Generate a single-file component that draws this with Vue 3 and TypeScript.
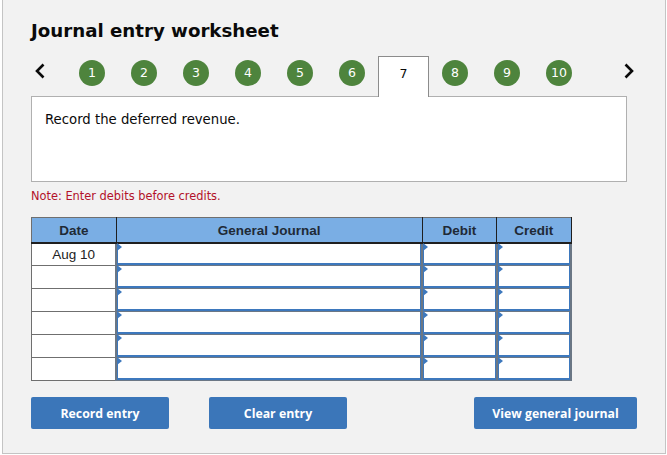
<script setup lang="ts">
const steps = [1, 2, 3, 4, 5, 6, 7, 8, 9, 10];
const activeStep = 7;
const rows = ['Aug 10', '', '', '', '', ''];
</script>

<template>
	<div class="panel">
		<h1 class="title">Journal entry worksheet</h1>

		<div class="nav">
			<svg class="chevron" width="10" height="16" viewBox="0 0 10 16">
				<path d="M8.5 1.5 L2 8 L8.5 14.5" fill="none" stroke="#0a0a0a" stroke-width="2.6" />
			</svg>
			<div class="steps">
				<div v-for="step in steps" :key="step" class="step" :class="{ active: step === activeStep }">
					<span v-if="step === activeStep" class="tab">{{ step }}</span>
					<span v-else class="dot">{{ step }}</span>
				</div>
			</div>
			<svg class="chevron right" width="10" height="16" viewBox="0 0 10 16">
				<path d="M1.5 1.5 L8 8 L1.5 14.5" fill="none" stroke="#0a0a0a" stroke-width="2.6" />
			</svg>
		</div>

		<div class="prompt">Record the deferred revenue.</div>
		<p class="note">Note: Enter debits before credits.</p>

		<table class="journal">
			<thead>
				<tr>
					<th class="col-date">Date</th>
					<th class="col-journal">General Journal</th>
					<th class="col-amount">Debit</th>
					<th class="col-amount">Credit</th>
				</tr>
			</thead>
			<tbody>
				<tr v-for="(date, i) in rows" :key="i">
					<td class="date">{{ date }}</td>
					<td class="entry"></td>
					<td class="entry"></td>
					<td class="entry"></td>
				</tr>
			</tbody>
		</table>

		<div class="actions">
			<button class="btn" type="button">Record entry</button>
			<button class="btn clear" type="button">Clear entry</button>
			<button class="btn view" type="button">View general journal</button>
		</div>
	</div>
</template>

<style scoped>
.panel {
	box-sizing: border-box;
	width: 664px;
	height: 454px;
	margin-left: 2px;
	padding: 20px 28px 0 28px;
	background: #f2f2f2;
	border: 1px solid #c4c4c4;
	border-top: none;
	font-family: "DejaVu Sans", Verdana, sans-serif;
}
.title {
	margin: 0;
	font-size: 18.2px;
	line-height: 22px;
	font-weight: bold;
	color: #0a0a0a;
}
.nav {
	display: flex;
	align-items: flex-start;
	width: 603px;
	height: 54px;
	margin-top: 14px;
}
.chevron {
	flex: none;
	margin-top: 7px;
	margin-left: 4px;
}
.chevron.right {
	margin-left: auto;
}
.steps {
	display: flex;
	margin-left: 21px;
}
.step {
	width: 52px;
	display: flex;
	justify-content: center;
}
.step.active {
	width: 51px;
}
.dot {
	width: 26px;
	height: 26px;
	margin-top: 4px;
	border-radius: 50%;
	background: #4e843d;
	color: #fff;
	font-size: 12.5px;
	line-height: 26px;
	text-align: center;
}
.tab {
	position: relative;
	z-index: 1;
	box-sizing: border-box;
	width: 51px;
	height: 41px;
	background: #fff;
	border: 1px solid #8c8c8c;
	border-bottom: none;
	color: #0a0a0a;
	font-size: 12.5px;
	line-height: 33px;
	text-align: center;
}
.prompt {
	box-sizing: border-box;
	width: 596px;
	height: 86px;
	margin-top: -14px;
	padding: 14px 13px;
	background: #fff;
	border: 1px solid #b0b0b0;
	color: #0a0a0a;
	font-size: 13.25px;
	line-height: 17px;
}
.note {
	margin: 7px 0 0;
	color: #b3112a;
	font-size: 11.4px;
	line-height: 15px;
}
.journal {
	margin-top: 13px;
	border-collapse: collapse;
	table-layout: fixed;
	width: 541px;
	font-family: "Liberation Sans", Arial, sans-serif;
	font-size: 13.5px;
}
.col-date {
	width: 84px;
}
.col-journal {
	width: 304px;
}
.col-amount {
	width: 74px;
}
th {
	box-sizing: border-box;
	height: 25px;
	padding: 1px 0 0;
	background: #7aaee4;
	border: 1px solid #6f6f6f;
	border-right-color: #1f1f1f;
	border-bottom: 2px solid #1f1f1f;
	color: #1f2a36;
	font-weight: bold;
	font-size: 13.5px;
}
td {
	box-sizing: border-box;
	height: 23px;
	padding: 1px 0 0;
	background: #fff;
}
.date {
	border: 1px solid #6f6f6f;
	text-align: center;
	color: #222;
}
.entry {
	position: relative;
	border: 1px solid #6b7785;
	border-left-width: 2px;
	border-right-width: 2px;
	box-shadow: inset 1px 0 0 #3d78bd, inset -1px 0 0 #3d78bd, inset 0 -2px 0 #3d78bd;
}
.entry::before {
	content: "";
	position: absolute;
	top: -1px;
	left: 0;
	border-left: 5px solid #3d78bd;
	border-top: 4px solid transparent;
	border-bottom: 4px solid transparent;
}
.actions {
	display: flex;
	width: 606px;
	margin-top: 16px;
}
.btn {
	width: 138px;
	height: 32px;
	padding: 0;
	background: #3b76b9;
	border: none;
	border-radius: 2px;
	color: #fff;
	font-family: "Open Sans", Tahoma, sans-serif;
	font-size: 12.3px;
	font-weight: bold;
}
.clear {
	margin-left: 40px;
}
.view {
	width: 163px;
	margin-left: auto;
}
</style>
